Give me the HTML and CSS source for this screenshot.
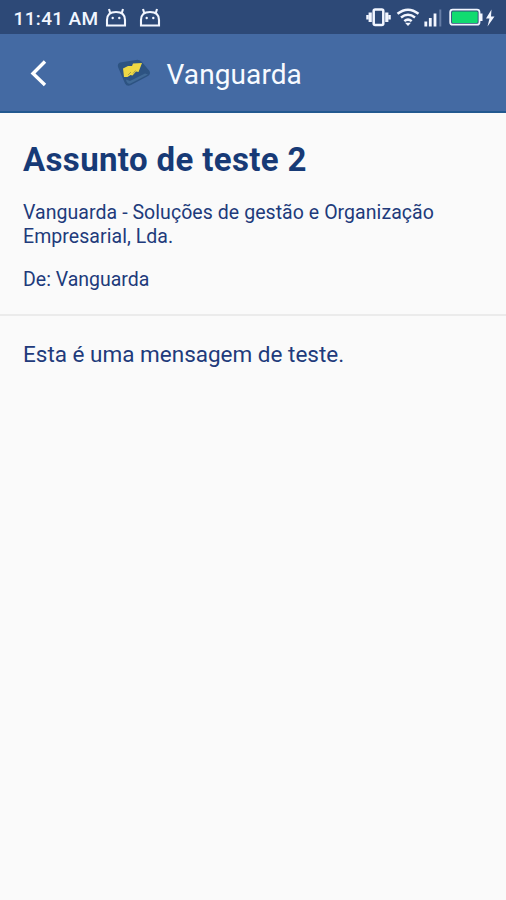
FILE: index.html
```html
<!DOCTYPE html>
<html lang="pt">
<head>
<meta charset="utf-8">
<title>Vanguarda</title>
<link rel="stylesheet" href="styles.css">
</head>
<body>
<div class="status-bar">
  <span class="time">11:41 AM</span>
  <svg class="droid" width="22" height="22" viewBox="0 0 22 22"><path d="M2 18.500V13q0-8 9-8t9 8v5.500zM5.500 7 4 2M16.500 7 18 2"/><circle cx="7.700" cy="11" r="1.200"/><circle cx="14.300" cy="11" r="1.200"/></svg>
  <svg class="droid droid-second" width="22" height="22" viewBox="0 0 22 22"><path d="M2 18.500V13q0-8 9-8t9 8v5.500zM5.500 7 4 2M16.500 7 18 2"/><circle cx="7.700" cy="11" r="1.200"/><circle cx="14.300" cy="11" r="1.200"/></svg>
  <svg class="system" width="140" height="24" viewBox="0 0 140 24">
    <g fill="none" stroke="#f2f6ff">
      <rect x="8.700" y="5.500" width="9.600" height="15.500" rx="1.500" stroke-width="2.500"/>
      <path d="M5.200 8.500v9.500M21.800 8.500v9.500" stroke-width="3.200"/>
      <path d="M2.500 11v4.500M24.500 11v4.500" stroke-width="2.500"/>
      <path d="M32.500 9.800q10.500-8.200 21 0M36 13.500q7-5.600 14 0M39.300 17.100q3.700-3 7.400 0" stroke-width="2.500"/>
      <path d="M60.800 17.500v5M65.300 14v8.500M70 9.500v13" stroke-width="2.800"/>
      <path d="M75.300 5.500v17" stroke-width="2" stroke="#667da6"/>
      <rect x="85.200" y="5.700" width="29.300" height="15" rx="2.500" stroke-width="1.800"/>
    </g>
    <path d="M40 18.700h6L43 22z" fill="#f2f6ff"/>
    <rect x="87" y="7.500" width="25.700" height="11.400" rx="1" fill="#10db70"/>
    <path d="M115 9.500h2.500V17H115zM126.500 5.500 121 14.500h3.500l-2 8 7-10H126z" fill="#f2f6ff"/>
  </svg>
</div>
<header class="app-bar">
  <svg class="back" width="18" height="28" viewBox="0 0 18 28"><path d="M16 2.500 4 14.500l12 11.500"/></svg>
  <svg class="logo" width="36" height="32" viewBox="0 0 36 32">
    <path d="M4 5.500 20 3q3-.6 5.500 1.500l8 9.500q1.500 3-1.500 5l-17 9q-4 2-6-1.500L2 10q-.8-3.500 2-4.500z" fill="#2d5382"/>
    <path d="m10 22.500 4 1.500 15-7.500 3 1-17.500 9q-2.500 1-4-2z" fill="#406996"/>
    <path d="M7 11.500 12 9h4l1-2.500 9-.5-3.500 9-2.500-.5-3.500 4-2-.5-3 2H8z" fill="#eed844"/>
    <path d="m12 18 3-3M17 16.500l2.500-3" stroke="#aaa049"/>
  </svg>
  <h1 class="app-title">Vanguarda</h1>
</header>
<main>
  <section class="message-head">
    <h2>Assunto de teste 2</h2>
    <p class="company">Vanguarda - Soluções de gestão e Organização Empresarial, Lda.</p>
    <p class="sender">De: Vanguarda</p>
  </section>
  <p class="message-body">Esta é uma mensagem de teste.</p>
</main>
</body>
</html>
```
FILE: styles.css
```css
* { box-sizing: border-box; }
body {
  margin: 0;
  min-height: 900px;
  background: #fafafa;
  font-family: Roboto, "Liberation Sans", sans-serif;
  color: #213a7b;
}
h1, h2, p { margin: 0; }
svg { display: block; flex: none; }
.status-bar {
  display: flex;
  height: 34px;
  padding-left: 13.5px;
  background: #2d4977;
  color: #f2f6ff;
}
.time {
  width: 91.5px;
  font-size: 19px;
  font-weight: 500;
  line-height: 37px;
  letter-spacing: .35px;
  white-space: nowrap;
}
.droid { margin-top: 7px; fill: none; stroke: #f2f6ff; stroke-width: 2.1; }
.droid circle { fill: #f2f6ff; stroke: none; }
.droid-second { margin-left: 11.5px; }
.system { margin: 4px 1px 0 auto; }
.app-bar {
  display: flex;
  align-items: center;
  height: 79px;
  padding-left: 29px;
  background: #446aa3;
  border-bottom: 2px solid #235990;
}
.back { fill: none; stroke: #fff; stroke-width: 3.4; }
.logo { margin-left: 69px; }
.app-title {
  margin-left: 14.5px;
  padding-top: 5px;
  color: #f7faff;
  font-size: 28px;
  font-weight: 400;
  line-height: 36px;
  letter-spacing: .1px;
}
.message-head {
  height: 203px;
  padding: 27px 23px 0;
  border-bottom: 2px solid #ebebeb;
}
h2 {
  color: #173a76;
  font-size: 33px;
  font-weight: 700;
  line-height: 40px;
  letter-spacing: .36px;
}
.company, .sender { font-size: 19.5px; line-height: 23.5px; }
.company { margin-top: 21px; letter-spacing: .06px; }
.sender { margin-top: 20px; }
.message-body { padding: 24px 23px; font-size: 22.5px; line-height: 28px; }
```
